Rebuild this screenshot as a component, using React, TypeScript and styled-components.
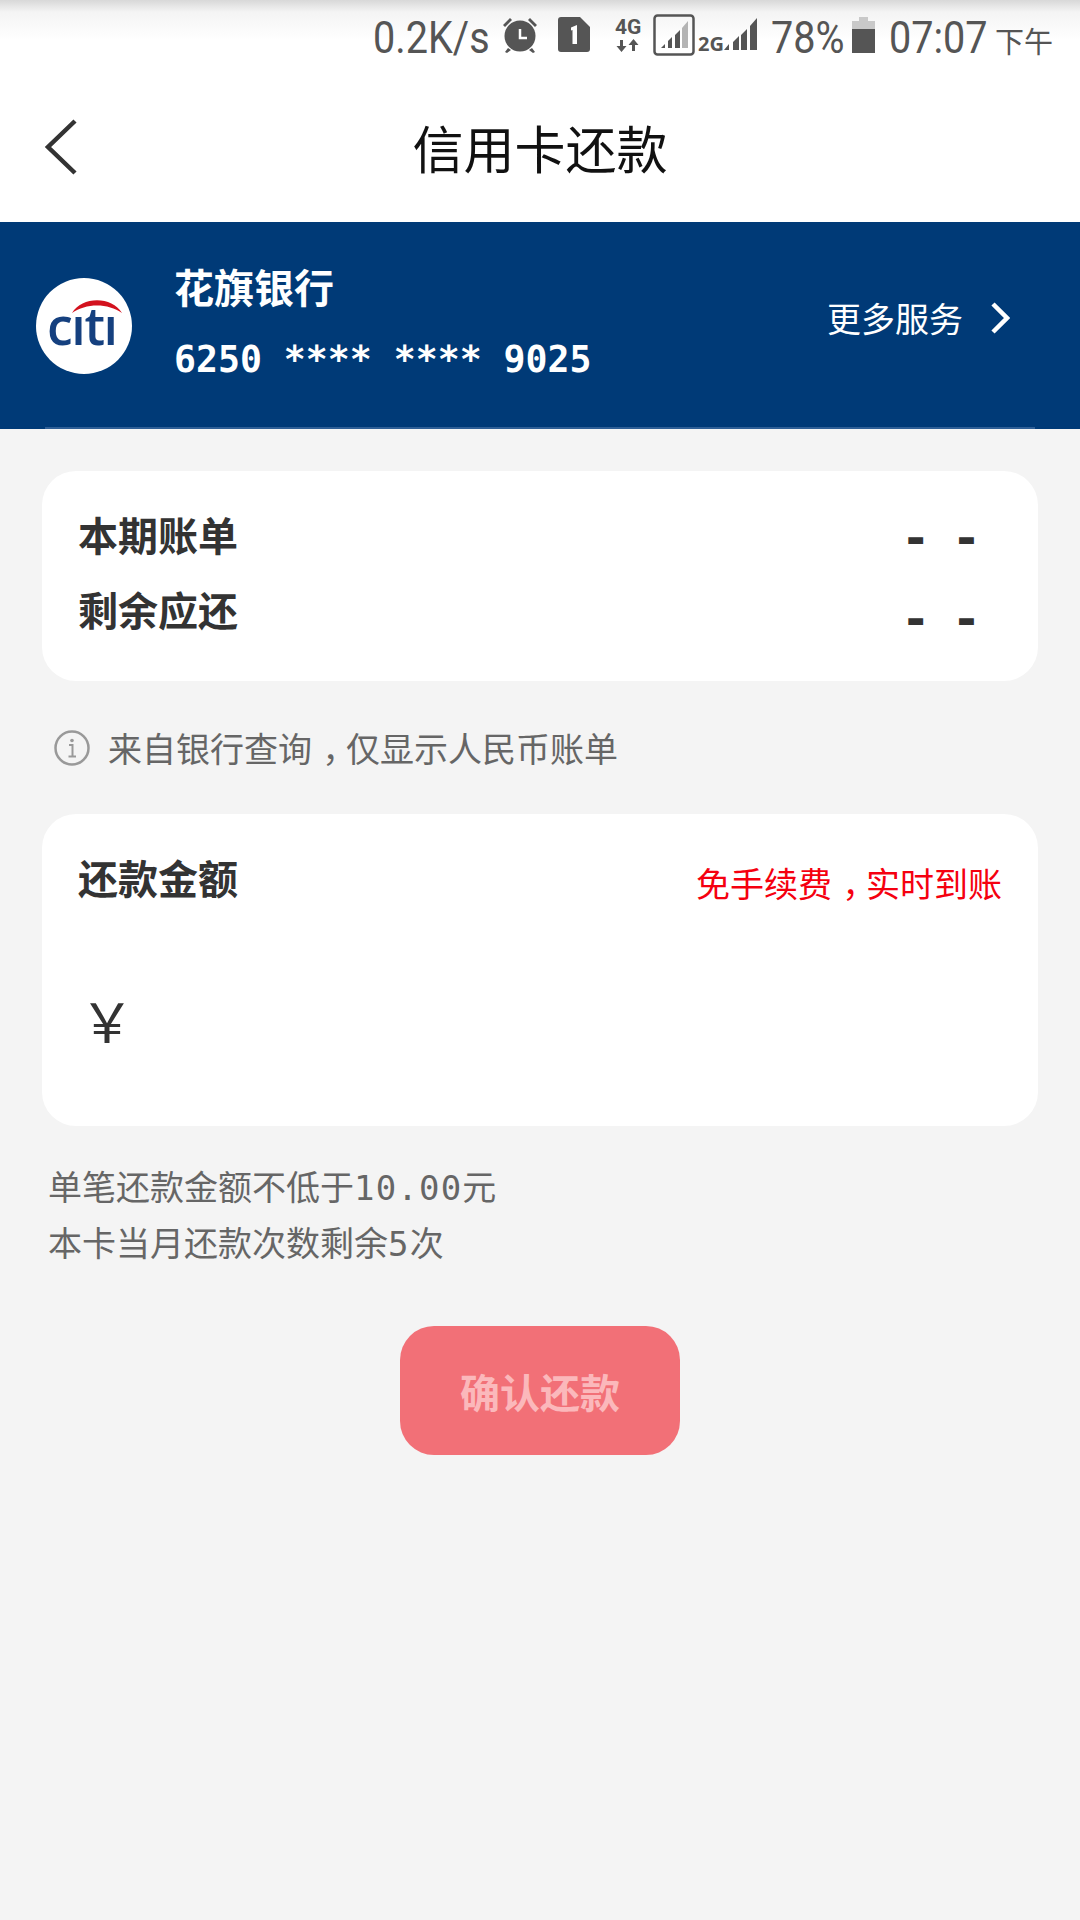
import styled, { createGlobalStyle } from 'styled-components';

const GlobalStyle = createGlobalStyle`
	html, body {
		margin: 0;
		padding: 0;
		background: #f4f4f4;
	}
	body {
		font-family: 'Noto Sans CJK SC', 'Noto Sans', sans-serif;
	}
`;

const Page = styled.div`
	width: 1080px;
	height: 1920px;
	overflow: hidden;
	background: #f4f4f4;
`;

const StatusBar = styled.div`
	height: 78px;
	box-sizing: border-box;
	padding: 0 27px 9px 0;
	display: flex;
	align-items: center;
	justify-content: flex-end;
	background: linear-gradient(#d8d8d8 0, #f4f4f4 12px, #ffffff 40px);
	color: #555555;
`;

// the phone's clock font is a condensed one, so Roboto gets squeezed into a fixed width
const StatusText = styled.span<{ $width: number; $ml?: number }>`
	display: block;
	flex: none;
	width: ${(p) => p.$width}px;
	margin: 5px 0 0 ${(p) => p.$ml ?? 0}px;
	font-family: Roboto, sans-serif;
	font-size: 45px;
	line-height: 1;
	white-space: nowrap;
	transform: scaleX(0.88);
	transform-origin: left center;
`;

const StatusUnit = styled.span`
	font-size: 29px;
	line-height: 1;
	margin: 12px 0 0 9px;
`;

const StatusIcon = styled.svg<{ $ml?: number }>`
	display: block;
	flex: none;
	margin-left: ${(p) => p.$ml ?? 0}px;
`;

const NetworkStack = styled.div`
	flex: none;
	width: 28px;
	margin-left: 24px;
	display: flex;
	flex-direction: column;
	align-items: center;
	gap: 3px;
	font-family: Roboto, sans-serif;
	font-size: 21px;
	font-weight: 700;
	line-height: 18px;
`;

const SecondSignal = styled.div`
	flex: none;
	margin-left: 3px;
	display: flex;
	align-items: flex-end;
	font-family: 'Noto Sans', sans-serif;
	font-size: 20px;
	font-weight: 700;
	line-height: 14px;
`;

const NavBar = styled.div`
	height: 144px;
	box-sizing: border-box;
	padding: 0 0 7px 43px;
	display: grid;
	grid-template-columns: 1fr auto 1fr;
	align-items: center;
	background: #ffffff;
`;

const NavTitle = styled.h1`
	margin: 0 0 0 -43px;
	font-size: 51px;
	font-weight: 400;
	color: #111111;
`;

const BankBar = styled.div`
	height: 207px;
	box-sizing: border-box;
	padding: 0 70px 0 36px;
	display: flex;
	align-items: center;
	position: relative;
	background: #003a77;
	&::after {
		content: '';
		position: absolute;
		left: 45px;
		right: 45px;
		bottom: 0;
		height: 2px;
		background: #2f5f96;
	}
`;

const LogoMark = styled.svg`
	display: block;
	flex: none;
`;

const BankInfo = styled.div`
	margin-left: 42px;
	padding-bottom: 12px;
	flex: 1;
	color: #ffffff;
`;

const BankName = styled.div`
	font-size: 40px;
	font-weight: 700;
	line-height: 56px;
`;

const CardNumber = styled.div`
	margin-top: 24px;
	font-family: 'DejaVu Sans Mono', monospace;
	font-size: 36.5px;
	font-weight: 700;
	line-height: 44px;
`;

const MoreLink = styled.div`
	display: flex;
	align-items: center;
	gap: 27px;
	margin-bottom: 16px;
	color: #ffffff;
	font-size: 34px;
`;

const Content = styled.div`
	padding: 42px 42px 0;
`;

const Card = styled.div<{ $height: number }>`
	height: ${(p) => p.$height}px;
	box-sizing: border-box;
	border-radius: 34px;
	background: #ffffff;
`;

const BillCard = styled(Card)`
	padding: 25px 57px 0 36px;
`;

const BillRow = styled.div`
	display: flex;
	align-items: center;
	justify-content: space-between;
	height: 75px;
`;

const RowLabel = styled.span`
	font-size: 40px;
	font-weight: 700;
	color: #333333;
`;

const Dashes = styled.span<{ $shift: number }>`
	font-family: 'DejaVu Sans Mono', monospace;
	font-size: 48px;
	font-weight: 700;
	color: #333333;
	letter-spacing: 22px;
	margin-right: -22px;
	transform: translateY(${(p) => p.$shift}px);
`;

const Notice = styled.div`
	height: 133px;
	padding: 0 0 0 12px;
	display: flex;
	align-items: center;
	gap: 18px;
	font-size: 34px;
	color: #666666;
`;

const AmountCard = styled(Card)`
	padding: 33px 36px 0 36px;
`;

const AmountHead = styled.div`
	display: flex;
	align-items: center;
	justify-content: space-between;
`;

const FeeNote = styled.span`
	margin-top: 11px;
	font-size: 34px;
	color: #f5000f;
`;

// the app centres the full-width comma in its cell: half-width glyph plus padding
const Comma = styled.span`
	font-feature-settings: 'halt';
	padding: 0 0.2em 0 0.3em;
`;

const Yen = styled.div`
	margin: 78px 0 0 2px;
	font-size: 54px;
	line-height: 70px;
	color: #333333;
`;

const Hints = styled.div`
	margin: 33px 0 0 6px;
	font-size: 34px;
	line-height: 54px;
	color: #666666;
`;

const Mono = styled.span`
	font-family: 'DejaVu Sans Mono', monospace;
	letter-spacing: 1.2px;
`;

const ConfirmButton = styled.button`
	display: block;
	width: 280px;
	height: 129px;
	margin: 55px auto 0;
	padding: 0;
	border: none;
	border-radius: 34px;
	background: #f27077;
	color: #fbb8bb;
	font-family: inherit;
	font-size: 40px;
	font-weight: 700;
`;

const AlarmIcon = () => (
	<StatusIcon $ml={12} width="36" height="36" viewBox="0 0 36 36" fill="#555555">
		<circle cx="18" cy="19" r="15.500" />
		<path d="M1 8 L8 1 L10 3 L3 10Z M35 8 L28 1 L26 3 L33 10Z M6 31l-3 4 2 1 4-3Z M30 31l3 4-2 1-4-3Z" />
		<path d="M18 12v9h7" fill="none" stroke="#ffffff" strokeWidth="2.500" />
	</StatusIcon>
);

const SimIcon = () => (
	<StatusIcon $ml={20} width="32" height="35" viewBox="0 0 32 35">
		<path d="M3 0H22L32 10V32a3 3 0 0 1-3 3H3a3 3 0 0 1-3-3V3a3 3 0 0 1 3-3Z" fill="#555555" />
		<path d="M13 10.500l6-2.500v19h-4.500V13l-1.500.5Z" fill="#ffffff" />
	</StatusIcon>
);

const NetworkArrows = () => (
	<StatusIcon width="24" height="13" viewBox="0 0 24 13" fill="#555555">
		<path d="M4 1h3v6h3.500L5.500 13 .5 7H4Z M16 12h3V6h3.500L17.500 0 12.500 6H16Z" />
	</StatusIcon>
);

const SignalBoxIcon = () => (
	<StatusIcon $ml={11} width="42" height="42" viewBox="0 0 42 42">
		<rect x="1.500" y="1.500" width="39" height="39" rx="3" fill="none" stroke="#555555" strokeWidth="2.500" />
		<path d="M8 34h4v-4Z M15 34h4V23l-4 4Z M22 34h5V16l-5 5Z" fill="#555555" />
		<path d="M29 34h6V7l-6 7Z" fill="#b4b4b4" />
	</StatusIcon>
);

const SecondSignalBars = () => (
	<StatusIcon width="33" height="33" viewBox="0 0 33 33" fill="#555555">
		<path d="M0 32h5v-6Z M9 32h6V18l-6 6Z M17 32h6V11l-6 6Z M26 32h7V0l-7 8Z" />
	</StatusIcon>
);

const BatteryIcon = () => (
	<StatusIcon $ml={10} width="23" height="36" viewBox="0 0 23 36">
		<path d="M7 0h9v4h7v8H0V4h7Z" fill="#c9c9c9" />
		<rect x="0" y="12" width="23" height="24" fill="#555555" />
	</StatusIcon>
);

const BackArrow = () => (
	<svg width="36" height="56" viewBox="0 0 36 56" fill="none">
		<path d="M32 2 L5 28 L32 54" stroke="#333333" strokeWidth="4.500" />
	</svg>
);

const MoreArrow = () => (
	<svg width="20" height="32" viewBox="0 0 20 32" fill="none">
		<path d="M3 2 L17 16 L3 30" stroke="#ffffff" strokeWidth="4.500" />
	</svg>
);

const InfoIcon = () => (
	<svg width="36" height="36" viewBox="0 0 36 36" fill="none">
		<circle cx="18" cy="18" r="16.500" stroke="#999999" strokeWidth="2.500" />
		<circle cx="18" cy="10.500" r="1.800" fill="#999999" />
		<path d="M15 15h3.500v11M14.500 26.500h7.500" stroke="#999999" strokeWidth="2" />
	</svg>
);

const CitiLogo = () => (
	<LogoMark width="96" height="96" viewBox="0 0 96 96">
		<circle cx="48" cy="48" r="48" fill="#ffffff" />
		<path d="M36 35 C46 18 76 18 86 35 C72 25 50 25 36 35Z" fill="#d3121e" />
		<text
			x="11"
			y="67"
			textLength="71"
			lengthAdjust="spacing"
			fontSize="52"
			fontFamily="'Open Sans', sans-serif"
			fontWeight="600"
			fill="#15407f"
		>
			cıtı
		</text>
	</LogoMark>
);

const App = () => {
	return (
		<Page>
			<GlobalStyle />
			<StatusBar>
				<StatusText $width={117}>0.2K/s</StatusText>
				<AlarmIcon />
				<SimIcon />
				<NetworkStack>
					4G
					<NetworkArrows />
				</NetworkStack>
				<SignalBoxIcon />
				<SecondSignal>
					2G
					<SecondSignalBars />
				</SecondSignal>
				<StatusText $width={71} $ml={14}>
					78%
				</StatusText>
				<BatteryIcon />
				<StatusText $width={97} $ml={14}>
					07:07
				</StatusText>
				<StatusUnit>下午</StatusUnit>
			</StatusBar>

			<NavBar>
				<BackArrow />
				<NavTitle>信用卡还款</NavTitle>
			</NavBar>

			<BankBar>
				<CitiLogo />
				<BankInfo>
					<BankName>花旗银行</BankName>
					<CardNumber>6250 **** **** 9025</CardNumber>
				</BankInfo>
				<MoreLink>
					更多服务
					<MoreArrow />
				</MoreLink>
			</BankBar>

			<Content>
				<BillCard $height={210}>
					<BillRow>
						<RowLabel>本期账单</RowLabel>
						<Dashes $shift={3}>--</Dashes>
					</BillRow>
					<BillRow>
						<RowLabel>剩余应还</RowLabel>
						<Dashes $shift={9}>--</Dashes>
					</BillRow>
				</BillCard>

				<Notice>
					<InfoIcon />
					<span>
						来自银行查询<Comma>，</Comma>仅显示人民币账单
					</span>
				</Notice>

				<AmountCard $height={312}>
					<AmountHead>
						<RowLabel>还款金额</RowLabel>
						<FeeNote>
							免手续费<Comma>，</Comma>实时到账
						</FeeNote>
					</AmountHead>
					<Yen>￥</Yen>
				</AmountCard>

				<Hints>
					<div>
						单笔还款金额不低于<Mono>10.00</Mono>元
					</div>
					<div>
						本卡当月还款次数剩余<Mono>5</Mono>次
					</div>
				</Hints>

				<ConfirmButton type="button">确认还款</ConfirmButton>
			</Content>
		</Page>
	);
};

export default App;
